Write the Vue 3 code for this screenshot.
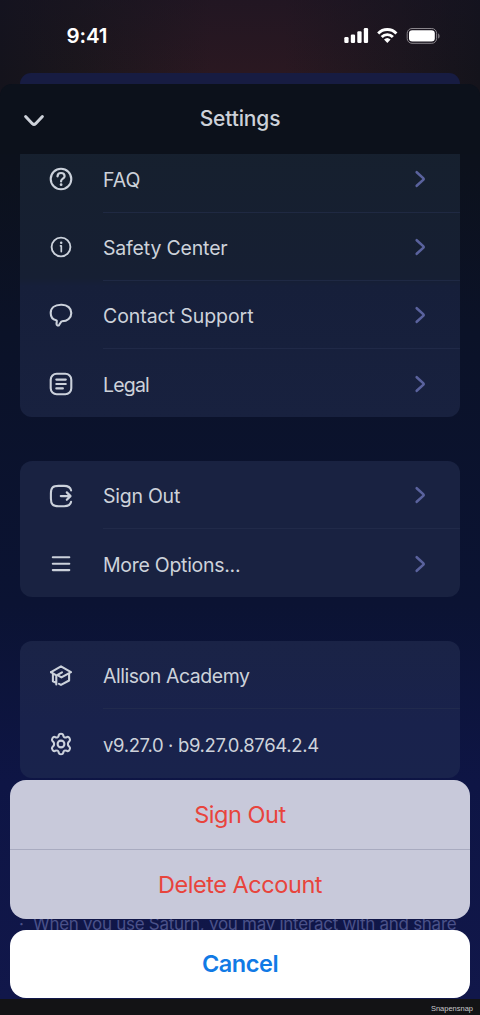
<script setup>
const groups = [
  [
    { icon: 'help', label: 'FAQ', cls: 'faq', go: true },
    { icon: 'info', label: 'Safety Center', cls: 'safety', go: true },
    { icon: 'chat', label: 'Contact Support', cls: 'contact', go: true },
    { icon: 'legal', label: 'Legal', cls: 'legal', go: true },
  ],
  [
    { icon: 'out', label: 'Sign Out', cls: 'signout', go: true },
    { icon: 'menu', label: 'More Options...', cls: 'more', go: true },
  ],
  [
    { icon: 'school', label: 'Allison Academy', cls: 'school' },
    { icon: 'gear', label: 'v9.27.0 · b9.27.0.8764.2.4', cls: 'version' },
  ],
]
</script>

<template>
  <div class="screen">
    <header class="status">
      <span class="time">9:41</span>
      <svg class="indicators" width="98" height="20" viewBox="0 0 98 20" fill="none">
        <g fill="#fff">
          <rect x="1.3" y="11" width="4.3" height="6" rx="1.2" />
          <rect x="7.8" y="8.6" width="4.3" height="8.4" rx="1.2" />
          <rect x="14.3" y="5.2" width="4.3" height="11.8" rx="1.2" />
          <rect x="20.8" y="2" width="4.3" height="15" rx="1.2" />
        </g>
        <g stroke="#fff" stroke-width="2.9">
          <path d="M35.2 7.4a12.7 12.7 0 0 1 18.2 0" />
          <path d="M38.7 11a7.8 7.8 0 0 1 11.2 0" />
        </g>
        <path d="M41 13.5a4.8 4.8 0 0 1 6.6 0L44.3 17z" fill="#fff" />
        <rect x="64.2" y="2.5" width="29.4" height="14.8" rx="4.8" stroke="#89858b" stroke-width="1" />
        <rect x="66" y="4.3" width="25.8" height="11.2" rx="3.3" fill="#fff" />
        <path d="M95.2 7.4c1.8.6 1.8 4.5 0 5.1z" fill="#89858b" />
      </svg>
    </header>
    <div class="behind"></div>

    <main class="sheet">
      <div class="bar">
        <svg class="down" width="22" height="14" viewBox="0 0 22 14">
          <path d="M2.6 2.5 9.4 9.7Q11 11.2 12.6 9.7L19.4 2.5" fill="none" stroke="#cdd1d9" stroke-width="3" stroke-linecap="round" />
        </svg>
        <h1>Settings</h1>
      </div>

      <div class="content">
        <section v-for="(rows, g) in groups" :key="g" class="card">
          <div v-for="row in rows" :key="row.icon" class="row">
            <svg class="icon" width="26" height="26" viewBox="0 0 26 26">
              <template v-if="row.icon === 'help'">
                <circle cx="13" cy="13" r="10.3" />
                <path d="M9.5 10.4C9.6 8.1 11 7 13 7s3.6 1.2 3.6 3.2c0 2.4-3.5 2.5-3.5 4.9v.3" stroke-width="2.2" />
                <circle class="solid" cx="13.1" cy="18.7" r="1.4" />
              </template>
              <template v-else-if="row.icon === 'info'">
                <circle cx="13" cy="13" r="9.4" stroke-width="1.9" />
                <path d="M12.5 11.8h.8v5.8" stroke-width="1.7" />
                <circle class="solid" cx="13.2" cy="8.7" r="1.25" />
              </template>
              <path v-else-if="row.icon === 'chat'" d="M13.7 2.8H13C6.5 2.8 2.7 6.2 2.7 11.1c0 3.9 2.1 6.5 5.5 7.2.5.1.7.5.6 1l-.3 2.6c-.1 1.5 1.8 2.2 2.7.9l2-3.1c.2-.3.4-.4.8-.4 5.4-.2 9.3-3.4 9.3-8.2s-3.7-8.3-9.6-8.3Z" />
              <template v-else-if="row.icon === 'legal'">
                <rect x="2.7" y="2.7" width="20.6" height="20.6" rx="6" />
                <path d="M8.3 8.6h9.5M8.3 13h9.5M8.3 17.4h6.6" />
              </template>
              <template v-else-if="row.icon === 'out'">
                <path d="M23.1 7.4C22.4 4.2 20.4 2.9 16 2.9h-5.5C4.7 2.9 2.9 4.8 2.9 10.5v5c0 5.7 1.8 7.7 7.6 7.7h5.6c4.5 0 6.4-1.3 7-4.4" />
                <path d="M12.8 13.1H22M18.8 9.4l3.7 3.7-3.7 3.7" stroke-width="2.2" />
              </template>
              <path v-else-if="row.icon === 'menu'" d="M4.8 6.3h16.5M4.8 12.7h16.5M4.8 19.1h16.5" />
              <template v-else-if="row.icon === 'school'">
                <path d="M3 9.2 13 3.4l10 5.8-9.6 5.2-3.1-1.7" />
                <path d="M14 9.3 8.3 12.6v8.8M4.9 10.4v7.9l3.2 1.5M3 9.2l5.2 3.2M11 20.8l2 1.1 8.1-4.4v-6.6" />
              </template>
              <template v-else>
                <path d="M10.9 3.9c.3-1.6 3.9-1.6 4.2 0l.4 1.4c.3 1 1.4 1.5 2.4 1.1l1.4-.5c1.6-.6 3.6 2.9 2.3 4l-1 1c-.9.9-.9 3.3 0 4.2l1 1c1.3 1.1-.7 4.6-2.3 4l-1.4-.5c-1-.4-2.1.1-2.4 1.1l-.4 1.4c-.3 1.6-3.9 1.6-4.2 0l-.4-1.4c-.3-1-1.4-1.5-2.4-1.1l-1.4.5c-1.6.6-3.6-2.9-2.3-4l1-1c.9-.9.9-3.3 0-4.2l-1-1c-1.3-1.1.7-4.6 2.3-4l1.4.5c1 .4 2.1-.1 2.4-1.1Z" />
                <circle cx="13" cy="13" r="3.4" />
              </template>
            </svg>
            <div class="line">
              <span class="label" :class="row.cls">{{ row.label }}</span>
              <svg v-if="row.go" class="go" width="12" height="18" viewBox="0 0 12 18">
                <path d="M2.7 2.2 9.2 8.1Q10.2 9 9.2 9.9L2.7 15.8" />
              </svg>
            </div>
          </div>
        </section>
      </div>

      <p class="note"><span>·</span><span class="words">When you use Saturn, you may interact with and share</span></p>
    </main>

    <div class="actions">
      <div class="choices">
        <button class="signout-btn">Sign Out</button>
        <button class="delete-btn">Delete Account</button>
      </div>
      <button class="cancel">Cancel</button>
    </div>

    <footer>Snapensnap</footer>
  </div>
</template>

<style>
body { margin: 0; background: #131315; }
</style>

<style scoped>
* { box-sizing: border-box; }
.screen {
  position: relative;
  width: 480px;
  height: 1015px;
  overflow: hidden;
  display: flex;
  flex-direction: column;
  font-family: Inter, "Liberation Sans", sans-serif;
  background: linear-gradient(90deg, #14131c 0, #1b161c 75px, #2a1821 210px, #2a1821 285px, #1d161e 400px, #14131b 480px);
}
.status {
  height: 73px;
  display: flex;
  justify-content: space-between;
  padding: 24px 39px 0 66.5px;
  background: linear-gradient(#15132466, #2a182100);
}
.time { color: #fff; font-size: 20.5px; font-weight: 600; line-height: 24px; letter-spacing: -.1px; }
.indicators { margin-top: 2px; }
.behind { flex: none; height: 11px; margin: 0 20px; border-radius: 11px 11px 0 0; background: #171c42; }
.sheet {
  flex: none;
  position: relative;
  height: 914.5px;
  overflow: hidden;
  border-radius: 12px 12px 0 0;
  background: linear-gradient(#0c111b 0, #0c111c 80px, #0b1228 250px, #0b1333 520px, #0e1545 700px, #11174a 914px);
}
.bar { position: relative; height: 70px; display: flex; align-items: center; justify-content: center; background: #0c111b; z-index: 1; }
.bar h1 { margin: 0; color: #cdd1d9; font-size: 21px; font-weight: 500; line-height: 26px; letter-spacing: -.15px; }
.down { position: absolute; left: 23px; top: 30px; }
.content { margin-top: -9.8px; padding: 0 20px; display: flex; flex-direction: column; gap: 43.5px; }
.card { border-radius: 12px; overflow: hidden; background: #192241; }
.card:nth-child(1) { background: linear-gradient(#16202e, #161f33 49%, #161f3a 52%, #18213f); }
.card:nth-child(3) { background: linear-gradient(#1a2346, #19224c 60%, #19234c); }
.row { height: 68.3px; display: flex; align-items: center; padding-left: 28px; }
.icon { flex: none; margin-top: 1px; fill: none; stroke: #cbd1db; stroke-width: 2.1; stroke-linecap: round; stroke-linejoin: round; }
.icon .solid { fill: #cbd1db; stroke: none; }
.line { flex: 1; height: 100%; margin-left: 29px; display: flex; align-items: center; justify-content: space-between; padding: 3.6px 34px 0 0; border-bottom: 1px solid #26304e99; }
.row:last-child .line { border-bottom-color: transparent; }
.label { color: #cdd2da; font-size: 19.5px; line-height: 26px; white-space: nowrap; }
.safety { letter-spacing: -.17px; }
.contact { letter-spacing: -.07px; }
.legal { letter-spacing: -.8px; }
.signout { letter-spacing: -.25px; }
.more { letter-spacing: -.28px; }
.school { letter-spacing: -.46px; }
.version { font-size: 18.5px; letter-spacing: -.35px; }
.go { margin-top: -2px; fill: none; stroke: #5a629d; stroke-width: 2.6; stroke-linecap: round; }
.note { position: absolute; left: 19px; top: 828px; margin: 0; display: flex; gap: 9px; color: #4a5189; font-size: 17px; line-height: 24px; white-space: nowrap; }
.words { letter-spacing: -.28px; }
.actions { position: absolute; left: 10px; right: 10px; top: 780px; display: flex; flex-direction: column; gap: 10.5px; }
.choices { border-radius: 16px; overflow: hidden; background: #c8c9da; }
button { display: block; width: 100%; height: 69.5px; margin: 0; padding: 1px 0 0; border: 0; background: transparent; color: #e8443c; font: 400 23.5px/30px Inter, "Liberation Sans", sans-serif; letter-spacing: -.45px; }
.signout-btn { height: 69px; }
.delete-btn { height: 70px; border-top: 1px solid #a9abc0; }
.cancel { height: 68.5px; border-radius: 16px; background: #fff; color: #117ae5; font-weight: 600; }
footer { flex: 1; padding: 5px 7px 0 0; text-align: right; color: #c9c9cb; background: #131315; font: 7.5px/10px "Liberation Sans", sans-serif; }
</style>
